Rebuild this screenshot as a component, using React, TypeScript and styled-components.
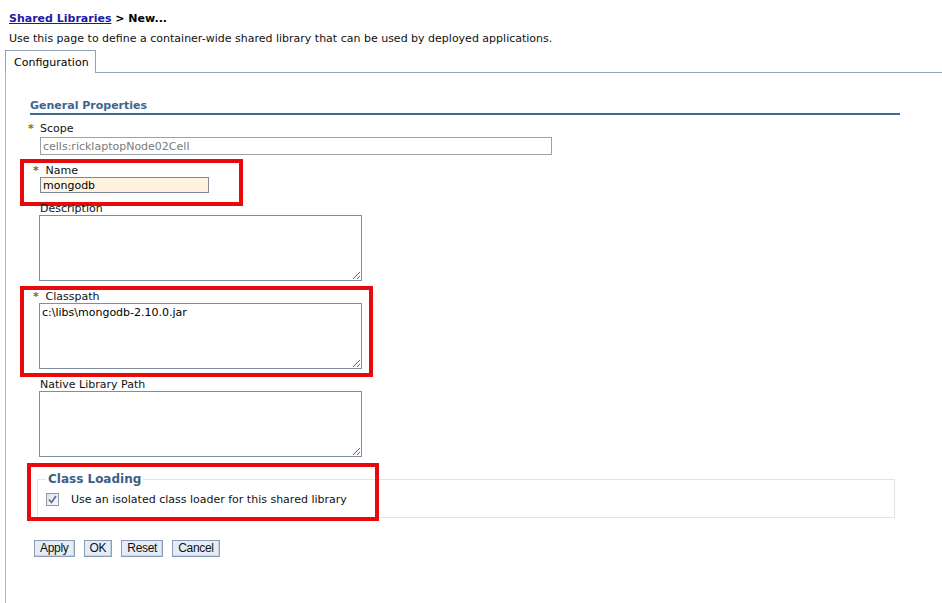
import React from "react";
import styled, { createGlobalStyle } from "styled-components";

const Global = createGlobalStyle`
  html, body { margin: 0; padding: 0; background: #fff; }
  body {
    font-family: "DejaVu Sans", Verdana, sans-serif;
    font-size: 11px;
    color: #000;
  }
`;

const Page = styled.div`
  width: 942px;
  height: 603px;
  overflow: hidden;
  display: flex;
  flex-direction: column;
`;

const Header = styled.div`
  padding: 12px 0 0 9px;
  display: flex;
  flex-direction: column;
  gap: 7px;
`;

const Crumbs = styled.div`
  font-weight: bold;
  line-height: 13px;
  a {
    color: #1a1aa8;
    text-decoration: underline;
  }
`;

const Intro = styled.div`
  line-height: 13px;
  color: #111;
`;

const TabBar = styled.div`
  margin-top: 5px;
  display: flex;
  align-items: flex-end;
  padding-left: 5px;
`;

const Tab = styled.div`
  width: 91px;
  height: 23px;
  box-sizing: border-box;
  border: 1px solid #8ea4bc;
  border-bottom: none;
  padding-left: 8px;
  display: flex;
  align-items: center;
  background: #fff;
`;

const TabRest = styled.div`
  flex: 1;
  border-bottom: 1px solid #8ea4bc;
`;

const Panel = styled.div`
  flex: 1;
  margin-left: 5px;
  border-left: 1px solid #a8b9cc;
  padding: 26px 0 0 24px;
  display: flex;
  flex-direction: column;
`;

const SectionTitle = styled.div`
  width: 870px;
  font-weight: bold;
  color: #3d6590;
  line-height: 13px;
  padding-bottom: 1px;
  border-bottom: 2px solid #3f6a95;
`;

const Fields = styled.div`
  margin-top: 8px;
  padding-left: 10px;
  display: flex;
  flex-direction: column;
  gap: 10px;
`;

const Field = styled.div`
  position: relative;
  display: flex;
  flex-direction: column;
`;

const Label = styled.label<{ $gap?: number }>`
  display: block;
  height: 12px;
  line-height: 12px;
  color: #111;
  margin-bottom: ${(p) => p.$gap ?? 0}px;
  white-space: nowrap;
`;

const Req = styled.span<{ $hang: number; $after?: number }>`
  display: inline-block;
  width: ${(p) => p.$hang}px;
  margin-left: -${(p) => p.$hang}px;
  margin-right: ${(p) => p.$after ?? 0}px;
  color: #7d6c10;
  font-weight: bold;
  font-size: 11px;
`;

const Input = styled.input<{ $w: number; $h: number; $bg?: string }>`
  box-sizing: border-box;
  width: ${(p) => p.$w}px;
  height: ${(p) => p.$h}px;
  margin: 0;
  padding: 0 2px;
  border: 1px solid #7f8a96;
  background: ${(p) => p.$bg ?? "#fff"};
  font-family: "DejaVu Sans", Verdana, sans-serif;
  font-size: 11px;
  color: #000;
  outline: none;
  &:disabled {
    color: #7a7a7a;
    border-color: #9aa3ac;
    background: #fff;
  }
`;

const Area = styled.textarea`
  box-sizing: border-box;
  width: 323px;
  height: 66px;
  margin: 0 0 0 -1px;
  padding: 2px 2px;
  border: 1px solid #7f8fa1;
  font-family: "DejaVu Sans", Verdana, sans-serif;
  font-size: 11px;
  line-height: 13px;
  color: #000;
  resize: both;
  outline: none;
  display: block;
`;

const Highlight = styled.span<{ $t: number; $l: number; $w: number; $h: number }>`
  position: absolute;
  top: ${(p) => p.$t}px;
  left: ${(p) => p.$l}px;
  width: ${(p) => p.$w}px;
  height: ${(p) => p.$h}px;
  box-sizing: border-box;
  border: 4px solid #e8090b;
  pointer-events: none;
`;

const GroupWrap = styled.div`
  position: relative;
  margin: 15px 0 0 7px;
  width: 858px;
`;

const Group = styled.fieldset`
  margin: 0;
  padding: 7px 0 11px 8px;
  border: 1px solid #dfe5ec;
  min-width: 0;
`;

const Legend = styled.legend`
  padding: 0 2px;
  margin-left: 0;
  font-weight: bold;
  font-size: 12px;
  color: #3b5f86;
  line-height: 14px;
`;

const CheckRow = styled.label`
  display: flex;
  align-items: center;
  gap: 12px;
  line-height: 13px;
  color: #111;
`;

const CheckBox = styled.span`
  width: 13px;
  height: 13px;
  box-sizing: border-box;
  border: 1px solid #8c9aab;
  background: linear-gradient(135deg, #dfe4ea 0%, #f7f8fa 100%);
  display: flex;
  align-items: center;
  justify-content: center;
`;

const Buttons = styled.div`
  margin: 22px 0 0 4px;
  display: flex;
  gap: 9px;
`;

const Button = styled.button`
  height: 17px;
  padding: 0 5px;
  margin: 0;
  border: 1px solid #8c9db3;
  background: #e4ecf7;
  font-family: "Liberation Sans", Arial, sans-serif;
  font-size: 12px;
  letter-spacing: -0.3px;
  line-height: 15px;
  color: #111;
  box-shadow: inset -1px -1px 0 #c9d4e2;
`;

export default function App() {
  return (
    <Page>
      <Global />
      <Header>
        <Crumbs>
          <a>Shared Libraries</a> &gt; New...
        </Crumbs>
        <Intro>Use this page to define a container-wide shared library that can be used by deployed applications.</Intro>
      </Header>
      <TabBar>
        <Tab>Configuration</Tab>
        <TabRest />
      </TabBar>
      <Panel>
        <SectionTitle>General Properties</SectionTitle>
        <Fields>
          <Field>
            <Label $gap={2}>
              <Req $hang={12}>*</Req>Scope
            </Label>
            <Input $w={512} $h={18} disabled value="cells:ricklaptopNode02Cell" readOnly />
          </Field>
          <Field>
            <Label>
              <Req $hang={7} $after={2}>*</Req> Name
            </Label>
            <Input $w={169} $h={16} $bg="#fdf3df" defaultValue="mongodb" />
            <Highlight $t={-6} $l={-20} $w={223} $h={47} />
          </Field>
          <Field>
            <Label>Description</Label>
            <Area />
          </Field>
          <Field>
            <Label>
              <Req $hang={7} $after={2}>*</Req> Classpath
            </Label>
            <Area defaultValue={"c:\\libs\\mongodb-2.10.0.jar"} spellCheck={false} />
            <Highlight $t={-5} $l={-20} $w={353} $h={91} />
          </Field>
          <Field>
            <Label>Native Library Path</Label>
            <Area />
          </Field>
        </Fields>
        <GroupWrap>
          <Group>
            <Legend>Class Loading</Legend>
            <CheckRow>
              <CheckBox>
                <svg width="9" height="9" viewBox="0 0 9 9">
                  <path d="M1 4.5 L3.5 7.5 L8 1" fill="none" stroke="#4b6c94" strokeWidth="1.6" />
                </svg>
              </CheckBox>
              Use an isolated class loader for this shared library
            </CheckRow>
          </Group>
          <Highlight $t={-9} $l={-10} $w={352} $h={58} />
        </GroupWrap>
        <Buttons>
          <Button>Apply</Button>
          <Button>OK</Button>
          <Button>Reset</Button>
          <Button>Cancel</Button>
        </Buttons>
      </Panel>
    </Page>
  );
}
